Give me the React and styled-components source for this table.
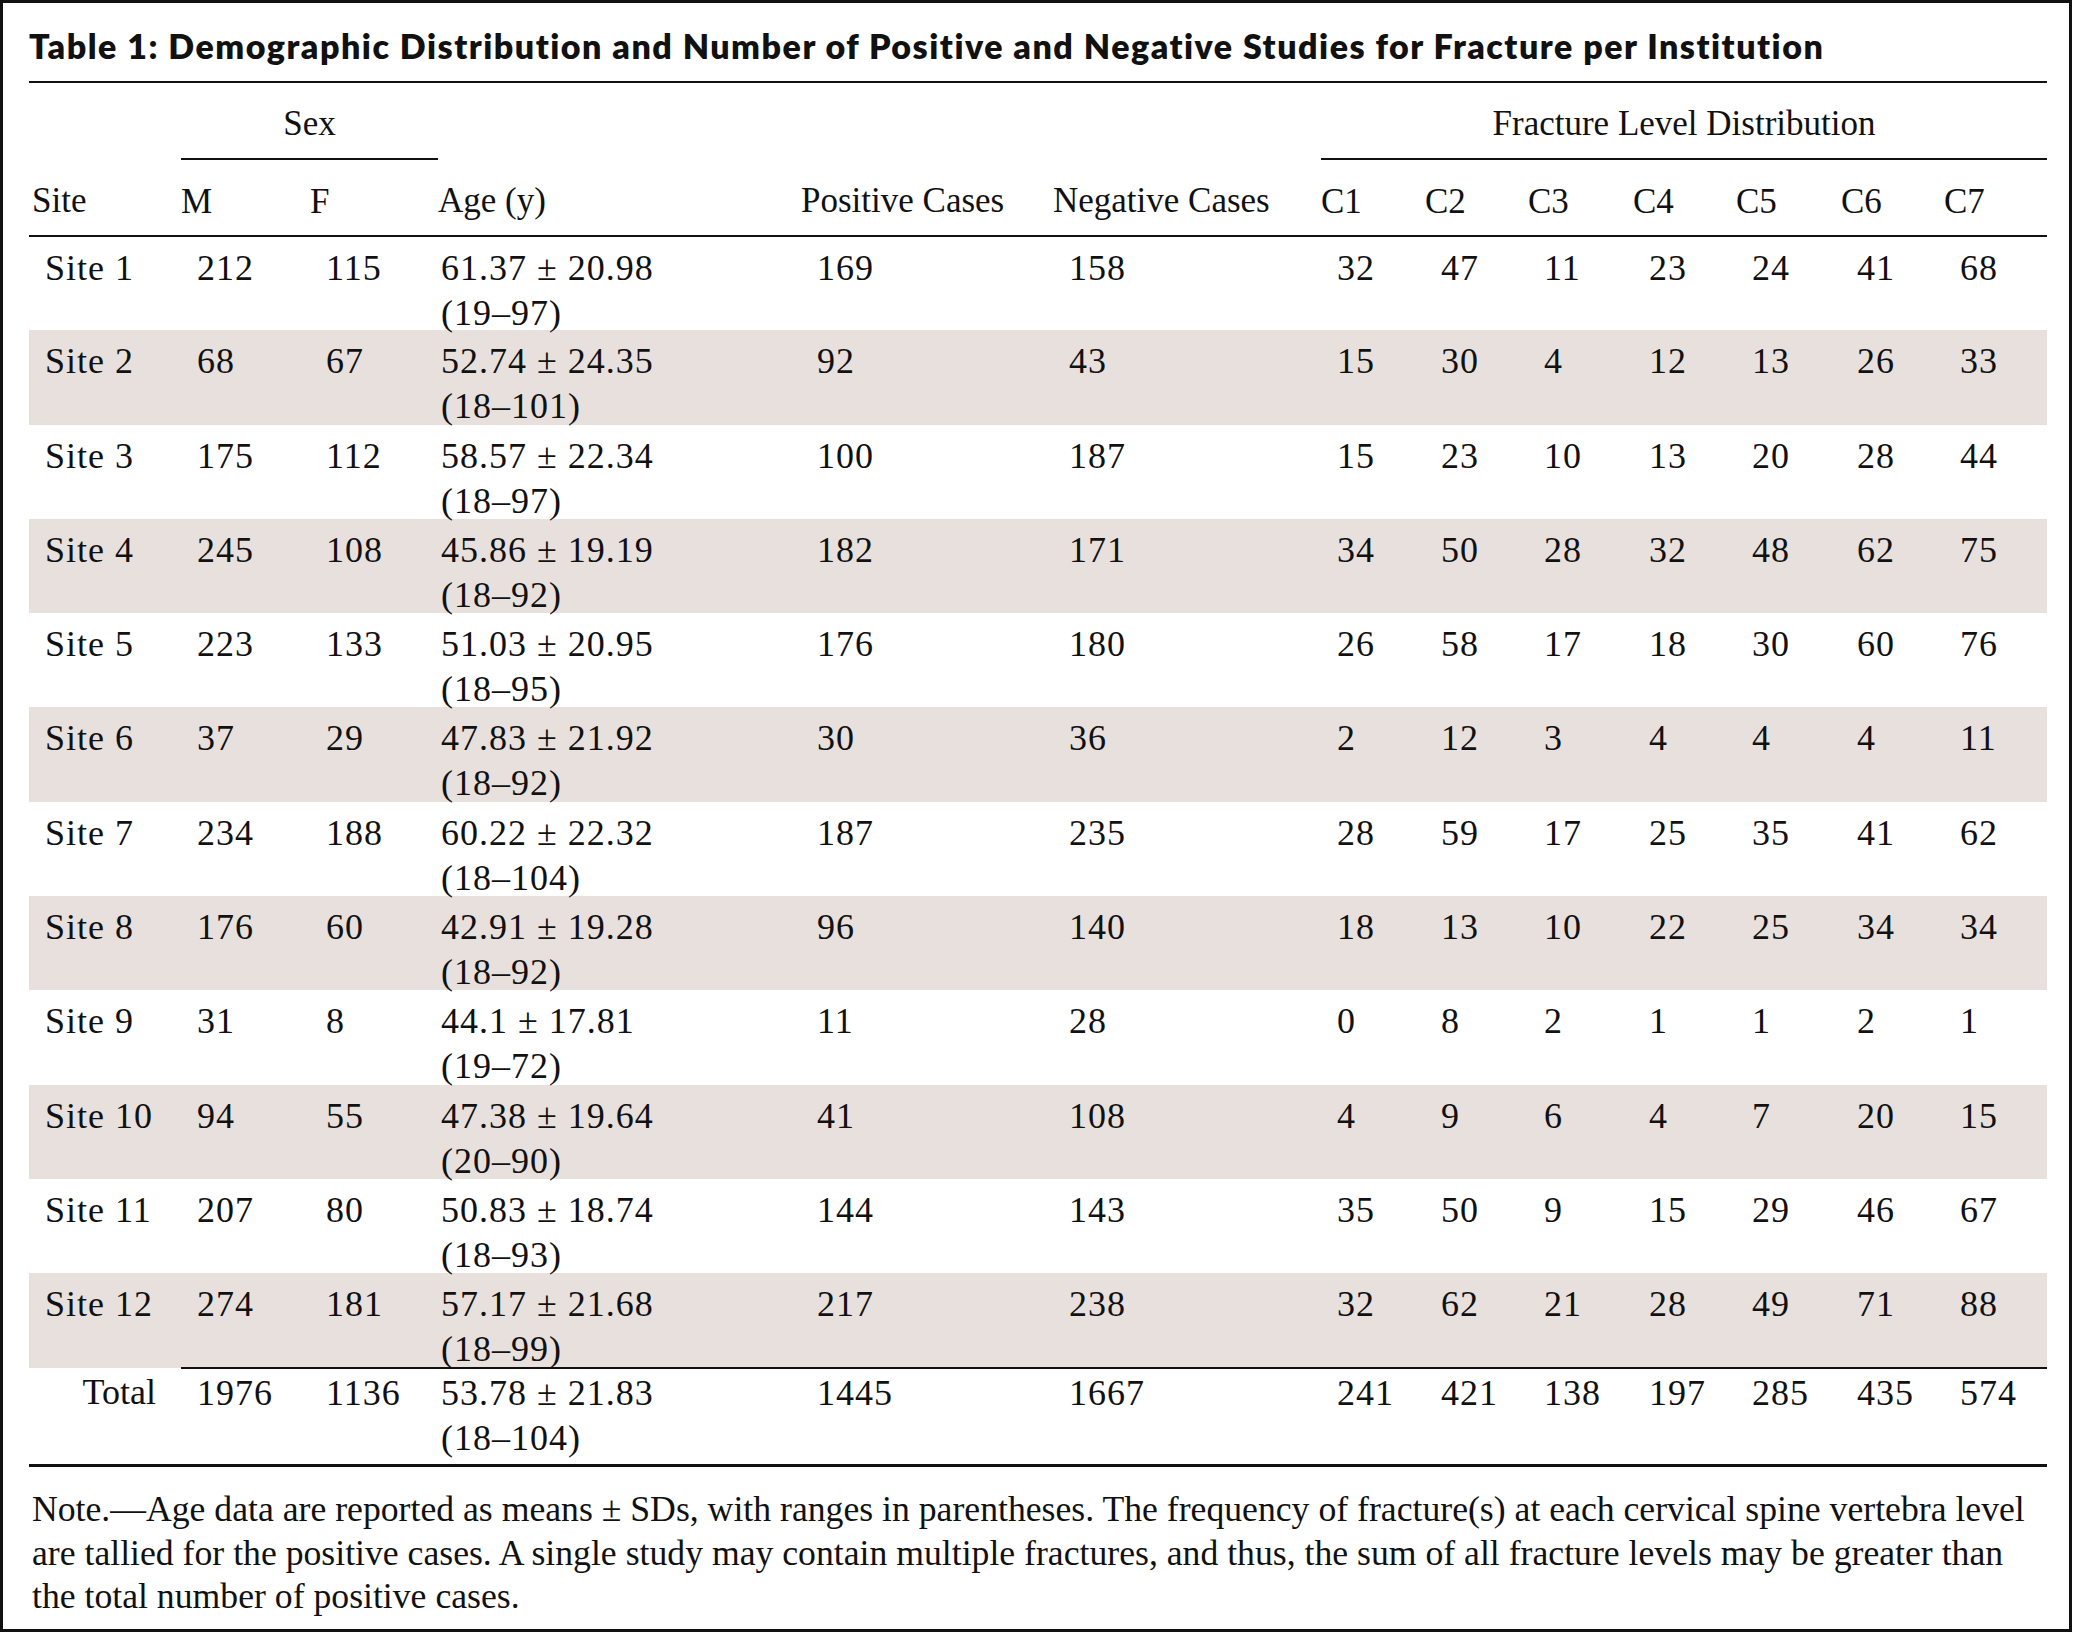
import styled, { createGlobalStyle } from "styled-components";

const GlobalStyle = createGlobalStyle`
  html, body {
    margin: 0;
    padding: 0;
    background: #fff;
  }
`;

const Frame = styled.div`
  box-sizing: border-box;
  width: 2072px;
  height: 1632px;
  border: 3px solid #111;
  padding: 23px 22px 0 26px;
  color: #111;
  font-family: "Liberation Serif", "Times New Roman", serif;
`;

const Title = styled.h2`
  margin: 0 0 15px 0;
  font-family: Lato, "Noto Sans", sans-serif;
  font-weight: 800;
  font-size: 34px;
  line-height: 40px;
  letter-spacing: 1.5px;
  white-space: nowrap;
`;

const Table = styled.table`
  width: 2018px;
  table-layout: fixed;
  border-collapse: collapse;
  border-top: 2px solid #111;
  border-bottom: 3px solid #111;
  font-size: 35px;
  line-height: 45px;
`;

const Col = styled.col`
  width: ${({ $w }) => $w}px;
`;

const GroupRow = styled.tr`
  height: 77px;
`;

const GroupCell = styled.th`
  padding: 18px 0 0 0;
  font-weight: normal;
  text-align: center;
  vertical-align: top;
  white-space: nowrap;
  border-bottom: ${({ $rule }) => ($rule ? "2px solid #111" : "none")};
`;

const HeadRow = styled.tr`
  height: 77px;
  border-bottom: 2px solid #111;
`;

const HeadCell = styled.th`
  padding: 19px 0 0 0;
  font-weight: normal;
  text-align: left;
  vertical-align: top;
  white-space: nowrap;

  &:first-child {
    padding-left: 3px;
  }
`;

const BodyRow = styled.tr`
  height: 94.3px;
  background: ${({ $shaded }) => ($shaded ? "#e7e0dd" : "transparent")};
`;

const Cell = styled.td`
  padding: 9px 0 0 ${({ $flush }) => ($flush ? 3 : 16)}px;
  vertical-align: top;
  white-space: nowrap;
  font-size: 36px;
  letter-spacing: 1px;
`;

const AgeStack = styled.div`
  margin-bottom: -6px;
`;

const TotalRow = styled.tr`
  height: 98px;
`;

const TotalLabel = styled.td`
  padding: 2px 25px 0 0;
  text-align: right;
  vertical-align: top;
  font-size: 36px;
`;

const TotalCell = styled(Cell)`
  padding-top: 2px;
  border-top: 2px solid #111;
`;

const Line = styled.span`
  display: block;
`;

const Note = styled.p`
  margin: 21px 0 0 3px;
  font-size: 35.7px;
  line-height: 43.5px;
  white-space: nowrap;
`;

const widths = [152, 129, 128, 363, 252, 268, 104, 103, 105, 103, 105, 103, 103];
const levels = ["C1", "C2", "C3", "C4", "C5", "C6", "C7"];

const rows = [
  ["Site 1", 212, 115, "61.37 ± 20.98", "(19–97)", 169, 158, [32, 47, 11, 23, 24, 41, 68]],
  ["Site 2", 68, 67, "52.74 ± 24.35", "(18–101)", 92, 43, [15, 30, 4, 12, 13, 26, 33]],
  ["Site 3", 175, 112, "58.57 ± 22.34", "(18–97)", 100, 187, [15, 23, 10, 13, 20, 28, 44]],
  ["Site 4", 245, 108, "45.86 ± 19.19", "(18–92)", 182, 171, [34, 50, 28, 32, 48, 62, 75]],
  ["Site 5", 223, 133, "51.03 ± 20.95", "(18–95)", 176, 180, [26, 58, 17, 18, 30, 60, 76]],
  ["Site 6", 37, 29, "47.83 ± 21.92", "(18–92)", 30, 36, [2, 12, 3, 4, 4, 4, 11]],
  ["Site 7", 234, 188, "60.22 ± 22.32", "(18–104)", 187, 235, [28, 59, 17, 25, 35, 41, 62]],
  ["Site 8", 176, 60, "42.91 ± 19.28", "(18–92)", 96, 140, [18, 13, 10, 22, 25, 34, 34]],
  ["Site 9", 31, 8, "44.1 ± 17.81", "(19–72)", 11, 28, [0, 8, 2, 1, 1, 2, 1]],
  ["Site 10", 94, 55, "47.38 ± 19.64", "(20–90)", 41, 108, [4, 9, 6, 4, 7, 20, 15]],
  ["Site 11", 207, 80, "50.83 ± 18.74", "(18–93)", 144, 143, [35, 50, 9, 15, 29, 46, 67]],
  ["Site 12", 274, 181, "57.17 ± 21.68", "(18–99)", 217, 238, [32, 62, 21, 28, 49, 71, 88]],
];

const total = [1976, 1136, "53.78 ± 21.83", "(18–104)", 1445, 1667, [241, 421, 138, 197, 285, 435, 574]];

function App() {
  return (
    <>
      <GlobalStyle />
      <Frame>
        <Title>
          Table 1: Demographic Distribution and Number of Positive and Negative Studies for Fracture per Institution
        </Title>
        <Table>
          <colgroup>
            {widths.map((w, i) => (
              <Col key={i} $w={w} />
            ))}
          </colgroup>
          <thead>
            <GroupRow>
              <GroupCell />
              <GroupCell colSpan={2} $rule>
                Sex
              </GroupCell>
              <GroupCell colSpan={3} />
              <GroupCell colSpan={7} $rule>
                Fracture Level Distribution
              </GroupCell>
            </GroupRow>
            <HeadRow>
              <HeadCell>Site</HeadCell>
              <HeadCell>M</HeadCell>
              <HeadCell>F</HeadCell>
              <HeadCell>Age (y)</HeadCell>
              <HeadCell>Positive Cases</HeadCell>
              <HeadCell>Negative Cases</HeadCell>
              {levels.map((l) => (
                <HeadCell key={l}>{l}</HeadCell>
              ))}
            </HeadRow>
          </thead>
          <tbody>
            {rows.map(([site, m, f, age, range, pos, neg, frac], i) => (
              <BodyRow key={site} $shaded={i % 2 === 1}>
                <Cell>{site}</Cell>
                <Cell>{m}</Cell>
                <Cell>{f}</Cell>
                <Cell $flush>
                  <AgeStack>
                    <Line>{age}</Line>
                    <Line>{range}</Line>
                  </AgeStack>
                </Cell>
                <Cell>{pos}</Cell>
                <Cell>{neg}</Cell>
                {frac.map((n, j) => (
                  <Cell key={j}>{n}</Cell>
                ))}
              </BodyRow>
            ))}
            <TotalRow>
              <TotalLabel>Total</TotalLabel>
              <TotalCell>{total[0]}</TotalCell>
              <TotalCell>{total[1]}</TotalCell>
              <TotalCell $flush>
                <Line>{total[2]}</Line>
                <Line>{total[3]}</Line>
              </TotalCell>
              <TotalCell>{total[4]}</TotalCell>
              <TotalCell>{total[5]}</TotalCell>
              {total[6].map((n, j) => (
                <TotalCell key={j}>{n}</TotalCell>
              ))}
            </TotalRow>
          </tbody>
        </Table>
        <Note>
          <Line>
            Note.—Age data are reported as means ± SDs, with ranges in parentheses. The frequency of fracture(s) at each cervical spine vertebra level
          </Line>
          <Line>
            are tallied for the positive cases. A single study may contain multiple fractures, and thus, the sum of all fracture levels may be greater than
          </Line>
          <Line>the total number of positive cases.</Line>
        </Note>
      </Frame>
    </>
  );
}

export default App;
